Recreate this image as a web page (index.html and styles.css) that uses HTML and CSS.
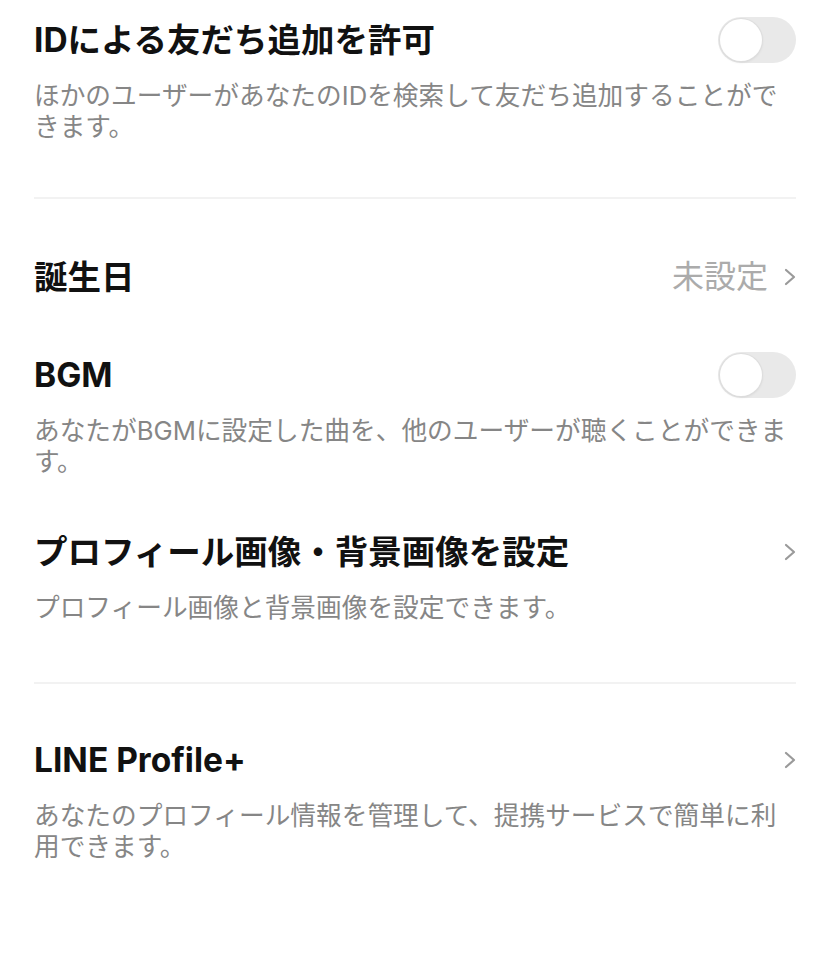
FILE: index.html
```html
<!DOCTYPE html>
<html>
<head>
  <meta charset="utf-8">
  <title>プロフィール設定</title>
  <link rel="stylesheet" href="styles.css">
</head>
<body>

<div class="settings">

  <div class="group first">
    <div class="item">
      <div class="item-head">
        <span class="item-title">IDによる友だち追加を許可</span>
        <span class="toggle"><span class="knob"></span></span>
      </div>
      <p class="item-desc">ほかのユーザーがあなたのIDを検索して友だち追加することができます。</p>
    </div>
  </div>

  <div class="divider"></div>

  <div class="group">
    <div class="item">
      <div class="item-head">
        <span class="item-title">誕生日</span>
        <span class="item-right">
          <span class="item-value">未設定</span>
          <svg class="chevron" width="14" height="20" viewBox="0 0 14 20"><polyline points="3,3 11,10 3,17" fill="none" stroke="#9a9a9a" stroke-width="2.2" stroke-linecap="round" stroke-linejoin="round"/></svg>
        </span>
      </div>
    </div>

    <div class="item">
      <div class="item-head">
        <span class="item-title">BGM</span>
        <span class="toggle"><span class="knob"></span></span>
      </div>
      <p class="item-desc">あなたがBGMに設定した曲を、他のユーザーが聴くことができます。</p>
    </div>

    <div class="item">
      <div class="item-head">
        <span class="item-title">プロフィール画像・背景画像を設定</span>
        <svg class="chevron" width="14" height="20" viewBox="0 0 14 20"><polyline points="3,3 11,10 3,17" fill="none" stroke="#9a9a9a" stroke-width="2.2" stroke-linecap="round" stroke-linejoin="round"/></svg>
      </div>
      <p class="item-desc">プロフィール画像と背景画像を設定できます。</p>
    </div>
  </div>

  <div class="divider"></div>

  <div class="group last">
    <div class="item">
      <div class="item-head">
        <span class="item-title">LINE Profile+</span>
        <svg class="chevron" width="14" height="20" viewBox="0 0 14 20"><polyline points="3,3 11,10 3,17" fill="none" stroke="#9a9a9a" stroke-width="2.2" stroke-linecap="round" stroke-linejoin="round"/></svg>
      </div>
      <p class="item-desc">あなたのプロフィール情報を管理して、提携サービスで簡単に利用できます。</p>
    </div>
  </div>

</div>

</body>
</html>
```

FILE: styles.css
```css
body {
  margin: 0;
  background-color: white;
  font-family: Inter, "Noto Sans CJK JP", sans-serif;
}

.settings {
  padding: 0 32px 0 34px;
}

.group {
  display: flex;
  flex-direction: column;
  gap: 52px;
  padding: 55px 0 59px;
}
.group.first {
  padding: 17px 0 55px;
}
.group.last {
  padding: 53px 0 40px;
}

.divider {
  height: 2px;
  background-color: #f2f2f2;
}

.item-head {
  display: flex;
  align-items: center;
  justify-content: space-between;
  height: 46px;
}

.item-title {
  font-size: 33.5px;
  font-weight: 700;
  line-height: 46px;
  color: #111;
}

.item-right {
  display: flex;
  align-items: center;
  gap: 15px;
}

.item-value {
  font-size: 32px;
  line-height: 46px;
  color: #ababab;
}

.chevron {
  display: block;
  margin-right: -1px;
}

.item-desc {
  margin: 17px 0 0;
  font-size: 25.7px;
  line-height: 31px;
  color: #868686;
}

.toggle {
  display: block;
  position: relative;
  width: 78px;
  height: 46px;
  border-radius: 23px;
  background-color: #e9e9e9;
}
.knob {
  position: absolute;
  top: 2px;
  left: 2px;
  width: 42px;
  height: 42px;
  border-radius: 50%;
  background-color: white;
  box-shadow: 0 0 0 1px #dedede, 0 1px 3px rgba(0, 0, 0, 0.12);
}
```
